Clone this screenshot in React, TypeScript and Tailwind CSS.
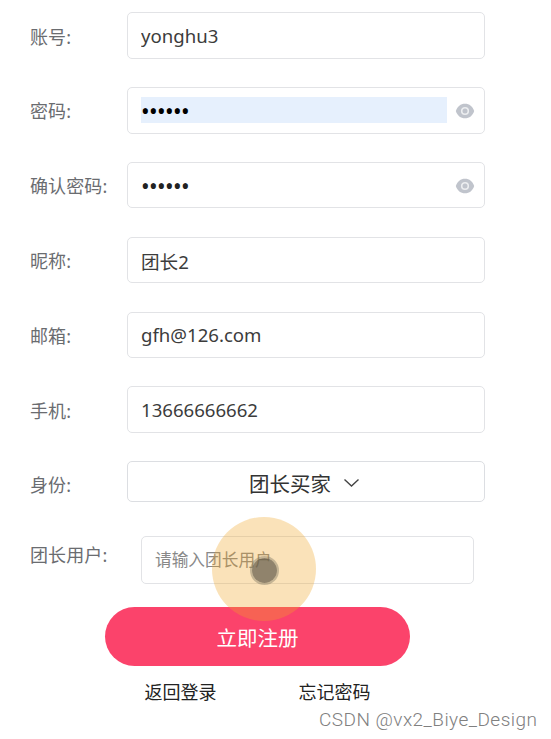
import React, { useState } from "react";

interface FieldProps {
  label: string;
  name: string;
  value: string;
  onChange: (e: React.ChangeEvent<HTMLInputElement>) => void;
}

const FormRow: React.FC<{ label: string; children: React.ReactNode }> = ({
  label,
  children,
}) => (
  <div className="flex h-[46.5px] items-center">
    <label className="w-[97px] shrink-0 pt-[2px] text-[18px] leading-6 tracking-[0.1px] whitespace-nowrap text-[#6a6c70]">
      {label}
    </label>
    {children}
  </div>
);

const TextField: React.FC<FieldProps> = ({ label, name, value, onChange }) => (
  <FormRow label={label}>
    <input
      type="text"
      name={name}
      value={value}
      onChange={onChange}
      className="h-full w-[358px] rounded-[5px] border border-[#e2e3e6] px-[13px] text-[18.6px] text-[#3c3c3c] outline-none"
    />
  </FormRow>
);

const EyeIcon = () => (
  <svg width="20" height="16" viewBox="0 0 20 16" className="mt-px shrink-0">
    <path
      d="M10 .7C5.6.7 2.3 3.3.8 8c1.500 4.700 4.800 7.300 9.200 7.300s7.700-2.600 9.200-7.300C17.700 3.300 14.400.7 10 .7z"
      fill="#c0c4cc"
    />
    <circle cx="10" cy="8" r="3.300" fill="none" stroke="#eceef0" strokeWidth="1.600" />
  </svg>
);

const PasswordField: React.FC<{ label: string; filled?: boolean }> = ({
  label,
  filled = false,
}) => (
  <FormRow label={label}>
    <div className="flex h-full w-[358px] items-center justify-between rounded-[5px] border border-[#e2e3e6] pr-[9px] pl-[13px]">
      <div
        className={`flex h-[26px] w-[306px] items-center pt-[3px] text-[23px] leading-none tracking-[-0.65px] ${
          filled ? "bg-[#e6f0fd] text-black" : "text-[#222]"
        }`}
      >
        ••••••
      </div>
      <EyeIcon />
    </div>
  </FormRow>
);

const App: React.FC = () => {
  const [form, setForm] = useState({
    username: "yonghu3",
    nickname: "团长2",
    email: "gfh@126.com",
    phone: "13666666662",
  });

  const handleChange = (e: React.ChangeEvent<HTMLInputElement>) => {
    const { name, value } = e.currentTarget;
    setForm((prev) => ({ ...prev, [name]: value }));
  };

  return (
    <div className="relative h-[739px] w-[551px] overflow-hidden bg-white font-['Noto_Sans','Noto_Sans_CJK_SC',sans-serif]">
      <form className="pt-[12.4px] pl-[30px]" onSubmit={(e) => e.preventDefault()}>
        <div className="flex flex-col gap-[28.3px]">
          <TextField label="账号:" name="username" value={form.username} onChange={handleChange} />
          <PasswordField label="密码:" filled />
          <PasswordField label="确认密码:" />
          <TextField label="昵称:" name="nickname" value={form.nickname} onChange={handleChange} />
          <TextField label="邮箱:" name="email" value={form.email} onChange={handleChange} />
          <TextField label="手机:" name="phone" value={form.phone} onChange={handleChange} />
          <FormRow label="身份:">
            <button
              type="button"
              className="flex h-[41px] w-[358px] items-center justify-center gap-[12px] self-start rounded-[5px] border border-[#dcdee2] pt-[5px] pr-[3px] text-[20.5px] text-[#333]"
            >
              团长买家
              <svg width="17" height="10" viewBox="0 0 17 10" fill="none" className="mb-[3px]">
                <path d="M1.500 1.500 8.500 8l7-6.500" stroke="#444" strokeWidth="1.400" />
              </svg>
            </button>
          </FormRow>
        </div>

        <div className="mt-[28.3px] flex h-[48px]">
          <label className="w-[111px] shrink-0 pt-[7px] text-[18px] leading-6 tracking-[0.1px] whitespace-nowrap text-[#6a6c70]">
            团长用户:
          </label>
          <input
            type="text"
            placeholder="请输入团长用户"
            className="h-full w-[333px] rounded-[5px] border border-[#e2e3e6] px-[13px] text-[16.7px] outline-none placeholder:text-[#888]"
          />
        </div>

        <button
          type="submit"
          className="mt-[23px] ml-[75px] block h-[59px] w-[305px] rounded-full bg-[#fb436b] pt-[3px] text-[20.5px] text-white"
        >
          立即注册
        </button>

        <div className="mt-[14px] ml-[114.500px] flex gap-[82px] text-[18px] leading-6 text-[#222]">
          <a href="#">返回登录</a>
          <a href="#">忘记密码</a>
        </div>
      </form>

      {/* click highlight around the pointer */}
      <div className="pointer-events-none absolute top-[517px] left-[212px] flex h-[104px] w-[104px] items-center justify-center rounded-full bg-[#f1a424]/32">
        <div className="mt-[2px] h-[29px] w-[29px] rounded-full border-2 border-[#777260]/40 bg-[#625b4c]/70 bg-clip-padding" />
      </div>

      <div className="absolute top-[708px] left-[319px] font-['Roboto','Liberation_Sans',sans-serif] text-[19px] leading-6 font-light tracking-[0.46px] whitespace-nowrap text-[#808080]">
        CSDN @vx2_Biye_Design
      </div>
    </div>
  );
};

export default App;
